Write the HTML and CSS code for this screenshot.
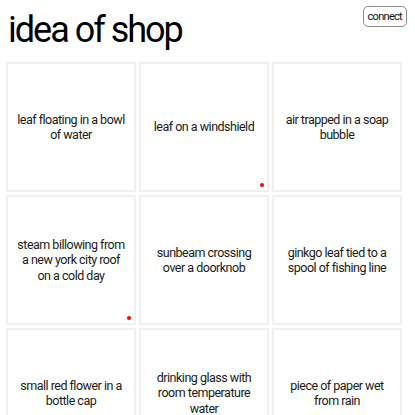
FILE: index.html
```html
<!DOCTYPE html>
<html lang="en">
<head>
<meta charset="utf-8">
<title>idea of shop</title>
<link rel="stylesheet" href="styles.css">
</head>
<body>
<header class="header">
  <h1 class="title">idea of shop</h1>
  <button class="connect">connect</button>
</header>
<main class="grid">
  <div class="card"><p>leaf floating in a bowl of water</p></div>
  <div class="card"><p>leaf on a windshield</p><span class="dot"></span></div>
  <div class="card"><p>air trapped in a soap bubble</p></div>
  <div class="card"><p>steam billowing from a new york city roof on a cold day</p><span class="dot"></span></div>
  <div class="card"><p>sunbeam crossing over a doorknob</p></div>
  <div class="card"><p>ginkgo leaf tied to a spool of fishing line</p></div>
  <div class="card"><p>small red flower in a bottle cap</p></div>
  <div class="card"><p>drinking glass with room temperature water</p></div>
  <div class="card"><p>piece of paper wet from rain</p></div>
</main>
</body>
</html>
```
FILE: styles.css
```css
html, body {
  margin: 0;
  padding: 0;
  background: #fff;
  color: #111;
  font-family: Roboto, "Liberation Sans", Arial, sans-serif;
}

.header {
  display: flex;
  justify-content: space-between;
  align-items: flex-start;
  padding: 6px 8px 0 8px;
  height: 62px;
  box-sizing: border-box;
}

.title {
  margin: 6px 0 0 0;
  font-size: 36px;
  line-height: 36px;
  font-weight: 400;
  letter-spacing: -2px;
  color: #000;
}

.connect {
  font-family: Roboto, "Liberation Sans", Arial, sans-serif;
  font-size: 11px;
  letter-spacing: -0.7px;
  height: 21px;
  padding: 0 4px 0 4px;
  background: #fff;
  color: #111;
  border: 1px solid #8e8e8e;
  border-radius: 5px;
}

.grid {
  display: grid;
  grid-template-columns: repeat(3, 130px);
  grid-auto-rows: 130px;
  gap: 3px;
  margin-left: 6px;
}

.card {
  position: relative;
  display: flex;
  align-items: center;
  justify-content: center;
  box-sizing: border-box;
  border: 2px solid #f0f0f0;
  padding: 0 8px;
  text-align: center;
}

.card p {
  margin: 0;
  font-size: 12.5px;
  line-height: 15.5px;
  letter-spacing: -0.5px;
  color: #1a1a1a;
}

.dot {
  position: absolute;
  right: 3px;
  bottom: 3px;
  width: 4px;
  height: 4px;
  border-radius: 50%;
  background: #ff0000;
}
```
